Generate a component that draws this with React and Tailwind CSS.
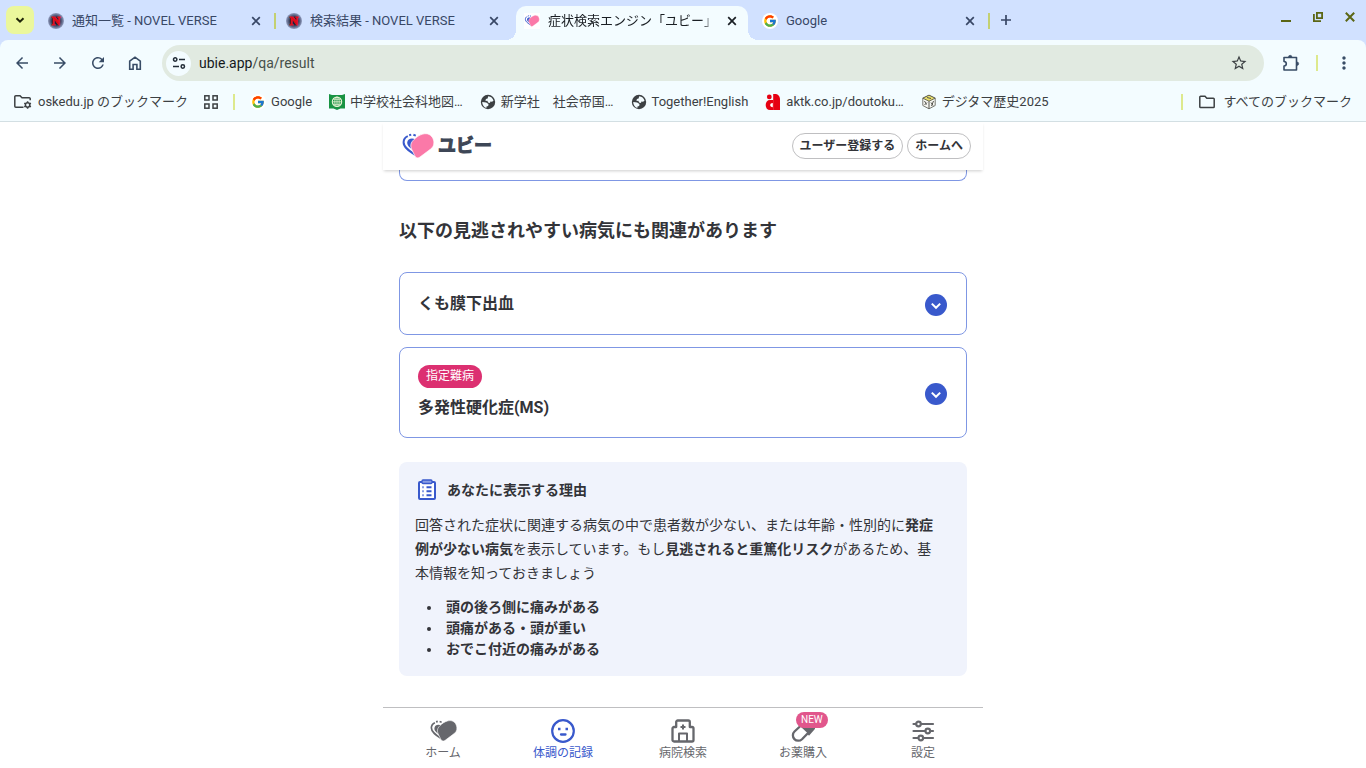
import React, { useState } from 'react';
import { FcGoogle } from 'react-icons/fc';
import {
  MdArrowBack,
  MdArrowForward,
  MdRefresh,
  MdStarBorder,
  MdMoreVert
} from 'react-icons/md';

// --- 1. ICONS ---
const HeartIcon = ({ className, front, back, gap }) => (
  <svg viewBox="0 0 32 26" className={className} aria-hidden="true">
    <path d="M13.500 22C8 18.500 1.500 14.600 1.600 9.200 1.700 6.200 3.400 4.200 5.800 3.200" fill="none" stroke={back} strokeWidth="2" />
    <path d="M7.200 2.200l2-.6M11.400 1.800l2.400.8" fill="none" stroke={back} strokeWidth="2" />
    <path d="M13 19C9 15 5 13.500 5.200 9.600 5.400 7 7.600 5.600 10 5.600c2.600 0 4 1.400 4.800 3.200z" fill={back} />
    <path d="M14 24.400c1.400.9 2.700.6 4-.4l11-8.200c3-2.400 3.600-6.400 2.100-10C29.300 1.700 25.500-.2 20.800 1.100 17.500 2 14.500 4 12 6.500 9.500 8.800 8.400 11 8.900 14c.3 1.600 1.100 3 1.700 4.200l2.200 4.600c.3.700.7 1.300 1.200 1.600z" fill={front} stroke={gap} strokeWidth=".7" />
  </svg>
);

const NovelIcon = () => (
  <span className="h-4 w-4 shrink-0 rounded-full bg-[radial-gradient(circle,#1b2140_30%,#9fabcd_75%)] text-center font-['Liberation_Serif',serif] text-xs leading-4 font-bold text-red-600 [-webkit-text-stroke:1px_#e01020]">
    N
  </span>
);

const GoogleIcon = () => (
  <span className="flex h-4 w-4 shrink-0 items-center justify-center rounded-full bg-white">
    <FcGoogle size={14} />
  </span>
);

const UbieIcon = () => (
  <span className="flex h-4 w-4 shrink-0 items-center justify-center bg-white">
    <HeartIcon className="h-3 w-4" front="#fb79a8" back="#3959cc" gap="#fff" />
  </span>
);

const GlobeIcon = () => (
  <svg viewBox="0 0 16 16" className="h-4 w-4 shrink-0" aria-hidden="true">
    <circle cx="8" cy="8" r="7.200" fill="#3c4043" />
    <path d="M8.200 2.300c2.600.1 4.700 2 5.300 4.500l-1.500.9-1.600-.3-.4 1.500-2-.4-.6-1.700-1.900.1.400-1.900 1.700-.5z" fill="#f3fcff" />
    <path d="M2.200 8l4 .5 2.300 1.600-.3 1.800-1.700.6-.1 1.400C3.900 13.300 2.200 10.900 2.200 8z" fill="#f3fcff" />
  </svg>
);

const SchoolIcon = () => (
  <svg viewBox="0 0 16 16" className="h-4 w-4 shrink-0" aria-hidden="true">
    <path d="M0 0l3 1h10l3-1v14.500h-4.500L8 16l-3.500-1.500H0z" fill="#189343" />
    <circle cx="8" cy="7.800" r="4.700" fill="#189343" stroke="#e9f3d4" strokeWidth="1.100" />
    <path d="M3.500 7.800h9M4.300 5.300h7.400M4.300 10.300h7.400M8 3.200v9.200" stroke="#e9f3d4" strokeWidth=".8" />
    <ellipse cx="8" cy="7.800" rx="2.200" ry="4.700" fill="none" stroke="#e9f3d4" strokeWidth=".8" />
  </svg>
);

const AktkIcon = () => (
  <svg viewBox="0 0 16 16" className="h-4 w-4 shrink-0" aria-hidden="true">
    <path d="M8.200 0h1.500C13 0 15 2 15 5.500V16H8.200z" fill="#e60012" />
    <circle cx="4.300" cy="2.900" r="2.400" fill="#e60012" />
    <path d="M8.400 6V16H5C2.300 16 .7 14 .7 11S2.300 6 5 6z" fill="#e60012" />
    <path d="M7.800 9v4.200c-1.700 0-2.600-.8-2.600-2.100S6.100 9 7.800 9z" fill="#fff" />
  </svg>
);

const CubeIcon = () => (
  <svg viewBox="0 0 16 16" className="h-4 w-4 shrink-0" aria-hidden="true">
    <path d="M8 1.200l6.200 3v7.300L8 14.800l-6.200-3.300V4.200z" fill="#f6f6f2" stroke="#77776f" />
    <path d="M8 1.200l6.200 3L8 7.200 1.800 4.200z" fill="#e9e06a" stroke="#5e5e50" strokeWidth=".9" />
    <path d="M8 7.200v7.600M6 3.500l4 1M3.500 7l2 3.500M6 8.500l-2.500 2.500M10 8.500l2 3M12.500 7l-2 5" stroke="#55554f" />
  </svg>
);

const ManagedFolderIcon = () => (
  <svg viewBox="0 0 18 16" className="h-4 w-[18px] shrink-0" fill="none" stroke="#3c4043" strokeWidth="1.500" aria-hidden="true">
    <path d="M9.500 13.300H1.800a1 1 0 0 1-1-1V2.700a1 1 0 0 1 1-1H6l2 2h7.200a1 1 0 0 1 1 1v1.500" />
    <circle cx="13.600" cy="11" r="2.200" />
    <path d="M13.600 7.200v1.400M13.600 13.400v1.400M10.300 9.100l1.200.7M15.700 12.200l1.200.7M10.300 12.900l1.200-.7M15.700 9.800l1.200-.7" />
  </svg>
);

const FolderIcon = () => (
  <svg viewBox="0 0 16 16" className="h-4 w-4 shrink-0" fill="none" stroke="#3c4043" strokeWidth="1.500" aria-hidden="true">
    <path d="M.8 3a.8.800 0 0 1 .8-.8H6l1.800 2h6.600a.8.800 0 0 1 .8.800v7.800a.8.800 0 0 1-.8.800H1.600a.8.800 0 0 1-.8-.8z" />
  </svg>
);

const AppsIcon = () => (
  <svg viewBox="0 0 14 14" className="h-3.5 w-3.5" fill="none" stroke="#3c4043" strokeWidth="1.500" aria-hidden="true">
    <rect x=".8" y=".8" width="4.200" height="4.200" />
    <rect x="9" y=".8" width="4.200" height="4.200" />
    <rect x=".8" y="9" width="4.200" height="4.200" />
    <rect x="9" y="9" width="4.200" height="4.200" />
  </svg>
);

const SiteInfoIcon = () => (
  <svg viewBox="0 0 14 14" className="h-3.5 w-3.5" fill="none" stroke="#202b36" strokeWidth="1.500" aria-hidden="true">
    <circle cx="3.200" cy="3.500" r="1.700" />
    <path d="M7 3.500h6M1 10.500h6" />
    <circle cx="10.800" cy="10.500" r="1.700" />
  </svg>
);

const HomeIcon = () => (
  <svg viewBox="0 0 16 16" className="h-4 w-4" fill="none" stroke="currentColor" strokeWidth="1.600" aria-hidden="true">
    <path d="M2.700 6.200L8 2.200l5.300 4v8.100H9.900V9.500H6.100v4.800H2.700z" />
  </svg>
);

const ExtensionIcon = () => (
  <svg viewBox="0 0 18 18" className="h-[18px] w-[18px]" fill="none" stroke="currentColor" strokeWidth="1.600" strokeLinejoin="round" aria-hidden="true">
    <path d="M2 3.500h12.500v12.500H2v-4c1.500 0 2.300-.9 2.300-2.200S3.500 7.500 2 7.500z" />
    <path d="M6.500 3a1.700 1.700 0 0 1 3.400 0zM15 8a1.700 1.700 0 0 1 0 3.400z" fill="currentColor" strokeWidth=".6" />
  </svg>
);

const CloseIcon = () => (
  <svg viewBox="0 0 12 12" className="h-3 w-3" stroke="currentColor" strokeWidth="1.700" aria-hidden="true">
    <path d="M2.200 2.200l7.600 7.600M9.800 2.200L2.200 9.800" />
  </svg>
);

const ClipboardIcon = () => (
  <svg viewBox="0 0 24 24" className="h-6 w-6" aria-hidden="true">
    <rect x="4" y="4" width="16" height="17" rx="1" fill="#fff" stroke="#3959cc" strokeWidth="2" />
    <rect x="7" y="2" width="10" height="3.500" rx="1" fill="#8b9fe4" stroke="#3959cc" strokeWidth="1.300" />
    <path d="M7 9.200h2M7 13.200h2M7 17.200h2" stroke="#8b9fe4" strokeWidth="2" />
    <path d="M11.500 9.200h5M11.500 13.200h5M11.500 17.200h5" stroke="#3959cc" strokeWidth="2" />
  </svg>
);

const FaceIcon = () => (
  <svg viewBox="0 0 24 24" className="h-6 w-6" fill="none" stroke="currentColor" strokeWidth="2.200" aria-hidden="true">
    <circle cx="12" cy="12" r="10.800" />
    <path d="M7 10h2.500M14.500 10H17" strokeWidth="2.500" />
    <path d="M10 15.500h4.500" strokeWidth="2.300" strokeLinecap="round" />
  </svg>
);

const HospitalIcon = () => (
  <svg viewBox="0 0 24 24" className="h-6 w-6" fill="none" stroke="currentColor" strokeWidth="2.300" strokeLinejoin="round" aria-hidden="true">
    <path d="M5.200 8V3a1.500 1.500 0 0 1 1.500-1.500h10.600A1.500 1.500 0 0 1 18.800 3v5h2.200a1.500 1.500 0 0 1 1.500 1.500v11.500a1.500 1.500 0 0 1-1.500 1.500H3A1.500 1.500 0 0 1 1.500 21V9.500A1.500 1.500 0 0 1 3 8z" />
    <path d="M12 5.500v5M9.500 8h5" strokeWidth="2" />
    <path d="M8 22v-7.500h8V22" strokeWidth="2" />
  </svg>
);

const PillIcon = () => (
  <svg viewBox="0 0 24 24" className="h-6 w-6" stroke="currentColor" strokeWidth="2.300" aria-hidden="true">
    <path d="M10 6l5-4.500a5.600 5.600 0 0 1 7.800 8L18 15z" fill="currentColor" />
    <path d="M10 6.500L3.500 12.500a5.300 5.300 0 0 0 7.500 7.700L17.500 13.500z" fill="#fff" />
  </svg>
);

const SlidersIcon = () => (
  <svg viewBox="0 0 24 24" className="h-6 w-6" fill="none" stroke="currentColor" strokeWidth="2.200" strokeLinecap="round" aria-hidden="true">
    <path d="M2.500 5H5M10 5h12M2.500 12h11.500M19.500 12H22M2.500 19H7M12.500 19H22" />
    <circle cx="7.500" cy="5" r="2.300" />
    <circle cx="16.800" cy="12" r="2.300" />
    <circle cx="9.800" cy="19" r="2.300" />
  </svg>
);

// --- 2. BROWSER CHROME ---
const tabs = [
  { id: 1, title: '通知一覧 - NOVEL VERSE', icon: <NovelIcon />, divider: true },
  { id: 2, title: '検索結果 - NOVEL VERSE', icon: <NovelIcon /> },
  { id: 3, title: '症状検索エンジン「ユビー」', icon: <UbieIcon />, active: true },
  { id: 4, title: 'Google', icon: <GoogleIcon />, divider: true },
];

const bookmarks = [
  { label: 'Google', icon: <GoogleIcon /> },
  { label: '中学校社会科地図…', icon: <SchoolIcon /> },
  { label: '新学社　社会帝国…', icon: <GlobeIcon /> },
  { label: 'Together!English', icon: <GlobeIcon /> },
  { label: 'aktk.co.jp/doutoku…', icon: <AktkIcon /> },
  { label: 'デジタマ歴史2025', icon: <CubeIcon /> },
];

const Tab = ({ tab }) => (
  <div
    className={`relative flex w-[238px] items-center pr-4 pb-1 pl-2 ${
      tab.active ? 'text-[#1a1f24]' : 'text-[#384766]'
    }`}
  >
    {tab.active && (
      <>
        <span className="absolute inset-y-0 right-1.5 left-0 rounded-t-[10px] bg-[#f3fcff]" />
        <span className="absolute bottom-0 -left-2.5 h-2.5 w-2.5 bg-[radial-gradient(circle_at_0_0,transparent_10px,#f3fcff_10px)]" />
        <span className="absolute -right-1 bottom-0 h-2.5 w-2.5 bg-[radial-gradient(circle_at_100%_0,transparent_10px,#f3fcff_10px)]" />
      </>
    )}
    <button className="relative flex min-w-0 flex-1 items-center gap-2 text-left">
      {tab.icon}
      <span className={`whitespace-nowrap ${tab.active ? 'mask-r-from-90%' : ''}`}>{tab.title}</span>
    </button>
    <button aria-label="タブを閉じる" className="relative ml-2">
      <CloseIcon />
    </button>
    {tab.divider && <span className="absolute right-0.5 h-4 w-0.5 bg-[#c3d072]" />}
  </div>
);

const Browser = () => (
  <div className="shrink-0 border-b border-[#d3dfe3] bg-[#d1e1ff] text-[13px]">
    <div className="flex h-10 pt-1.5 pl-1.5">
      <button aria-label="タブを検索" className="flex h-7 w-7 items-center justify-center rounded-lg bg-[#ebf79c]">
        <svg viewBox="0 0 10 10" className="h-2.5 w-2.5" fill="none" stroke="#1f2409" strokeWidth="2">
          <path d="M1.500 3.200L5 6.700l3.500-3.500" />
        </svg>
      </button>
      <div className="ml-1.5 flex">
        {tabs.map((tab) => (
          <Tab key={tab.id} tab={tab} />
        ))}
      </div>
      <button aria-label="新しいタブ" className="ml-1 flex h-7 w-5 items-center justify-center text-[#384766]">
        <svg viewBox="0 0 12 12" className="h-3 w-3"><path d="M6 1v10M1 6h10" stroke="currentColor" strokeWidth="1.700" /></svg>
      </button>
      <div className="ml-auto flex h-[22px] items-center gap-[22px] pr-[11px] text-[#5b6615]">
        <button aria-label="最小化">
          <svg viewBox="0 0 10 10" className="h-2.5 w-2.5"><path d="M0 9h10" stroke="currentColor" strokeWidth="2" /></svg>
        </button>
        <button aria-label="元に戻す">
          <svg viewBox="0 0 10 10" className="h-2.5 w-2.5" fill="none" stroke="currentColor" strokeWidth="1.800">
            <path d="M3.900.9h5.200v5.200H3.900zM.9 2v7.100H8" />
          </svg>
        </button>
        <button aria-label="閉じる">
          <svg viewBox="0 0 10 10" className="h-2.5 w-2.5"><path d="M.8.8l8.400 8.400M9.200.8L.8 9.200" stroke="currentColor" strokeWidth="2" /></svg>
        </button>
      </div>
    </div>

    <div className="rounded-t-lg bg-[#f3fcff]">
      <div className="flex items-center pt-[5px] pr-3 pl-[13px] text-[#384c66]">
        <div className="flex w-[149px] items-center gap-5">
          <button aria-label="戻る"><MdArrowBack size={18} /></button>
          <button aria-label="進む"><MdArrowForward size={18} /></button>
          <button aria-label="再読み込み"><MdRefresh size={18} /></button>
          <button aria-label="ホーム"><HomeIcon /></button>
        </div>
        <div className="flex h-9 flex-1 items-center rounded-full bg-[#e1eae1] pr-4 pl-1">
          <button aria-label="サイト情報" className="flex h-[25px] w-[25px] items-center justify-center rounded-full bg-[#f3fcff]">
            <SiteInfoIcon />
          </button>
          <span className="ml-2 flex-1 text-sm text-[#47504a]">
            <span className="text-[#15191c]">ubie.app</span>/qa/result
          </span>
          <button aria-label="ブックマークに追加" className="text-[#3c4043]"><MdStarBorder size={18} /></button>
        </div>
        <div className="ml-[18px] flex items-center gap-4">
          <button aria-label="拡張機能"><ExtensionIcon /></button>
          <span className="h-4 w-0.5 bg-[#dde98d]" />
          <button aria-label="メニュー"><MdMoreVert size={20} /></button>
        </div>
      </div>

      <div className="flex h-10 items-center pt-px pr-3.5 pl-3.5 text-[#3c4043]">
        <a href="#managed" className="flex items-center gap-1.5"><ManagedFolderIcon />oskedu.jp のブックマーク</a>
        <button aria-label="アプリ" className="ml-4"><AppsIcon /></button>
        <span className="mx-[15px] h-4 w-0.5 bg-[#dde98d]" />
        <div className="flex gap-[17px]">
          {bookmarks.map((b) => (
            <a key={b.label} href="#bookmark" className="flex items-center gap-[5px] whitespace-nowrap">
              {b.icon}
              {b.label}
            </a>
          ))}
        </div>
        <span className="ml-auto h-4 w-0.5 bg-[#dde98d]" />
        <a href="#all" className="ml-4 flex items-center gap-2"><FolderIcon />すべてのブックマーク</a>
      </div>
    </div>
  </div>
);

// --- 3. PAGE ---
const DiseaseCard = ({ name, badge }) => {
  const [open, setOpen] = useState(false);

  return (
    <button
      onClick={() => setOpen(!open)}
      aria-expanded={open}
      className={`flex w-full items-center justify-between rounded-lg border border-[#7f97e4] pr-[19px] pl-[18px] text-left ${
        badge ? 'py-[17px]' : 'py-[18px]'
      }`}
    >
      <span className="flex flex-col items-start gap-2">
        {badge && <span className="rounded-full bg-[#dc3071] px-2 pb-px text-xs leading-[22px] text-white">{badge}</span>}
        <span className="text-base leading-6 font-bold">{name}</span>
      </span>
      <span className="pt-[3px]">
        <svg viewBox="0 0 22 22" className="h-[22px] w-[22px]" aria-hidden="true">
          <circle cx="11" cy="11" r="11" fill="#3959cc" />
          <path d="M6.800 9.600L11 13.800l4.200-4.200" fill="none" stroke="#fff" strokeWidth="2" />
        </svg>
      </span>
    </button>
  );
};

const navItems = [
  { label: 'ホーム', icon: <HeartIcon className="h-[22px] w-[27px]" front="#66676c" back="#66676c" gap="#fff" /> },
  { label: '体調の記録', icon: <FaceIcon />, active: true },
  { label: '病院検索', icon: <HospitalIcon /> },
  { label: 'お薬購入', icon: <PillIcon />, isNew: true },
  { label: '設定', icon: <SlidersIcon /> },
];

const BottomNav = () => (
  <nav className="grid grid-cols-5 border-t border-[#bfbfc1] bg-white pt-[11px] pb-1">
    {navItems.map((item) => (
      <a
        key={item.label}
        href="#nav"
        className={`flex flex-col items-center text-xs leading-[21px] ${item.active ? 'text-[#3959cc]' : 'text-[#66676c]'}`}
      >
        <span className="relative flex h-6 items-center">
          {item.icon}
          {item.isNew && (
            <span className="absolute -top-[7px] left-[5px] rounded-full bg-[#e1568c] px-[5px] text-[10px] leading-4 text-white">
              NEW
            </span>
          )}
        </span>
        {item.label}
      </a>
    ))}
  </nav>
);

export default function App() {
  return (
    <div className="flex h-screen flex-col bg-white font-[Roboto,'Noto_Sans_CJK_JP',sans-serif]">
      <Browser />
      <div className="mx-auto flex min-h-0 w-full max-w-[600px] flex-1 flex-col text-[#333439]">
        <header className="z-10 flex h-12 shrink-0 items-center justify-between bg-white pr-3 pl-[19px] shadow-[0_2px_3px_-1px_rgba(0,0,0,0.2)]">
          <a href="#top" className="flex items-center gap-1 text-lg font-bold text-[#3d4656]">
            <HeartIcon className="h-[26px] w-8" front="#fb79a8" back="#3959cc" gap="#fff" />
            <span className="[-webkit-text-stroke:1px_#3d4656]">ユビー</span>
          </a>
          <div className="flex gap-1 text-xs leading-6 font-bold">
            <button className="rounded-full border border-[#bfbfc1] px-[7px]">ユーザー登録する</button>
            <button className="rounded-full border border-[#bfbfc1] px-[7px]">ホームへ</button>
          </div>
        </header>

        <main className="min-h-0 flex-1 overflow-hidden px-4">
          <div className="h-[11px] rounded-b-lg border border-t-0 border-[#7f97e4]" />
          <h2 className="mt-9 mb-[27px] text-lg leading-7 font-bold">以下の見逃されやすい病気にも関連があります</h2>
          <div className="flex flex-col gap-3">
            <DiseaseCard name="くも膜下出血" />
            <DiseaseCard name="多発性硬化症(MS)" badge="指定難病" />
          </div>

          <section className="mt-6 rounded-lg bg-[#f0f3fc] p-4 text-sm">
            <h3 className="flex items-center gap-2 leading-6 font-bold">
              <ClipboardIcon />
              あなたに表示する理由
            </h3>
            <p className="mt-[11px] pr-2 leading-6">
              回答された症状に関連する病気の中で患者数が少ない、または年齢・性別的に<b>発症例が少ない病気</b>を表示しています。もし<b>見逃されると重篤化リスク</b>があるため、基本情報を知っておきましょう
            </p>
            <ul className="mt-3 list-disc pl-[27px] leading-[21px] font-bold">
              <li className="pl-1">頭の後ろ側に痛みがある</li>
              <li className="pl-1">頭痛がある・頭が重い</li>
              <li className="pl-1">おでこ付近の痛みがある</li>
            </ul>
          </section>
        </main>

        <BottomNav />
      </div>
    </div>
  );
}
